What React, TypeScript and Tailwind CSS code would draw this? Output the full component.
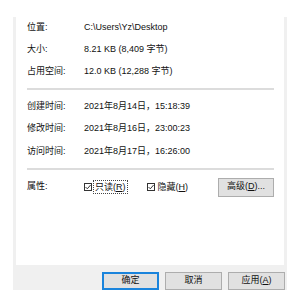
const font = { fontFamily: '"Liberation Sans", "Noto Sans CJK SC", sans-serif' };

const Row = ({ label, value }: { label: string; value: string }) => (
  <div className="flex h-[22px] items-center">
    <span className="w-[57px] shrink-0">{label}</span>
    <span>{value}</span>
  </div>
);

const Check = ({ text, hotkey, focus }: { text: string; hotkey: string; focus?: boolean }) => (
  <div className="flex items-center">
    <span className="w-[8px] h-[8px] border border-[#333] bg-white flex items-center justify-center">
      <svg width="6" height="6" viewBox="0 0 6 6">
        <path d="M0.5 3 L2.3 4.8 L5.6 1" stroke="#222" strokeWidth="0.9" fill="none" />
      </svg>
    </span>
    <span className={`ml-[1px] px-[1px] leading-[12px] ${focus ? 'border border-dotted border-[#444]' : 'border border-transparent'}`}>
      {text}(<span className="underline">{hotkey}</span>)
    </span>
  </div>
);

const Button = ({ children, primary }: { children: React.ReactNode; primary?: boolean }) => (
  <div
    className={`w-[57px] h-[18px] flex items-center justify-center bg-[#e1e1e1] ${
      primary ? 'border-2 border-[#1a84dc]' : 'border border-[#adadad]'
    }`}
  >
    {children}
  </div>
);

const App = () => {
  return (
    <div className="w-[300px] h-[300px] bg-white text-[9px] text-[#111]" style={font}>
      <div className="pt-[17px] pl-[13px]">
        <div className="w-[274px] h-[273px] bg-[#f0f0f0] flex flex-col">
          <div className="relative mx-[3px] -mt-[17px] h-[265px] bg-white pl-[11px] pr-[10px] pt-[17px]">
            <Row label="位置:" value="C:\Users\Yz\Desktop" />
            <Row label="大小:" value="8.21 KB (8,409 字节)" />
            <Row label="占用空间:" value="12.0 KB (12,288 字节)" />
            <div className="h-[2px] bg-[#dcdcdc] mt-[5px] mb-[5px]" />
            <div className="flex flex-col">
              <div className="h-[22.5px] flex items-center"><span className="w-[57px]">创建时间:</span><span>2021年8月14日，15:18:39</span></div>
              <div className="h-[22.5px] flex items-center"><span className="w-[57px]">修改时间:</span><span>2021年8月16日，23:00:23</span></div>
              <div className="h-[22.5px] flex items-center"><span className="w-[57px]">访问时间:</span><span>2021年8月17日，16:26:00</span></div>
            </div>
            <div className="h-[2px] bg-[#dcdcdc] mt-[5px]" />
            <div className="flex items-center mt-[8px] h-[19px]">
              <span className="w-[57px]">属性:</span>
              <Check text="只读" hotkey="R" focus />
              <div className="ml-[19px]">
                <Check text="隐藏" hotkey="H" />
              </div>
              <div className="ml-auto w-[56px] h-[19px] bg-[#e1e1e1] border border-[#adadad] flex items-center justify-center">
                高级(<span className="underline">D</span>)...
              </div>
            </div>
          </div>
          <div className="flex justify-end gap-[6px] pr-[2px] pt-[7px]">
            <Button primary>确定</Button>
            <Button>取消</Button>
            <Button>
              应用(<span className="underline">A</span>)
            </Button>
          </div>
        </div>
      </div>
    </div>
  );
};

export default App;
